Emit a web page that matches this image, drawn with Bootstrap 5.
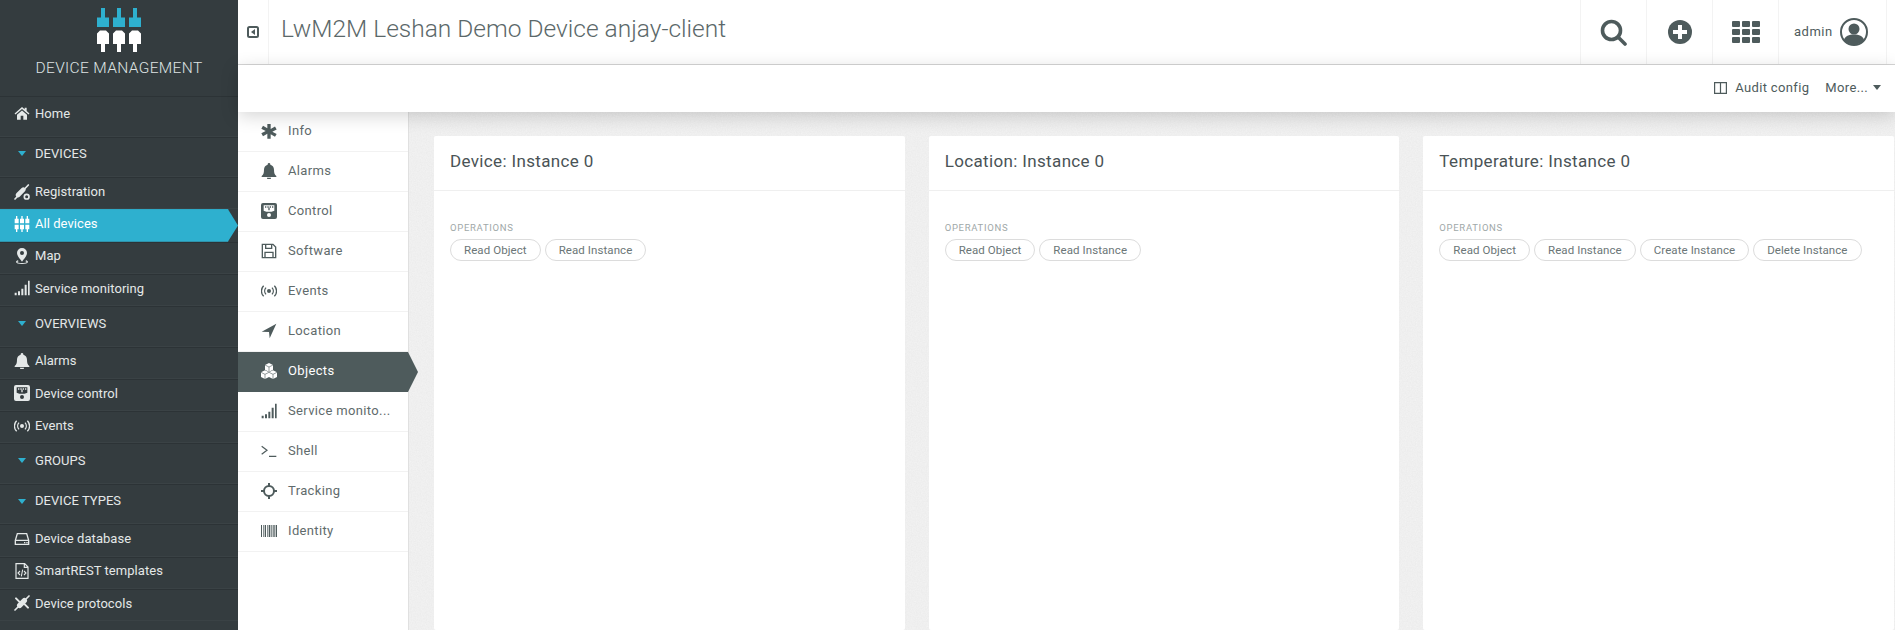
<!DOCTYPE html>
<html lang="en">
<head>
    <meta charset="UTF-8">
    <meta name="viewport" content="width=device-width, initial-scale=1.0">
    <title>LwM2M Leshan Demo Device anjay-client</title>
    <link href="https://cdn.jsdelivr.net/npm/bootstrap@5.3.0/dist/css/bootstrap.min.css" rel="stylesheet">
    <style>
        html, body { height: 630px; overflow: hidden; }
        body {
            font-family: Roboto, "Liberation Sans", sans-serif; color: #4e5b5c; background-color: #f4f4f4;
            background-image: url("data:image/svg+xml,%3Csvg xmlns='http://www.w3.org/2000/svg' width='120' height='120'%3E%3Cfilter id='n'%3E%3CfeTurbulence type='fractalNoise' baseFrequency='.8' numOctaves='2' stitchTiles='stitch'/%3E%3CfeColorMatrix values='0 0 0 0 0 0 0 0 0 0 0 0 0 0 0 0 0 0 .04 0'/%3E%3C/filter%3E%3Crect width='120' height='120' filter='url(%23n)'/%3E%3C/svg%3E");
        }
        .ico { width: 16px; height: 16px; fill: currentColor; flex: none; }

        /* left navigator */
        .side { width: 238px; flex: none; background: #343c3f; color: #e4e8e8; font-size: 13px; letter-spacing: .05px; }
        .side-brand { height: 96px; padding-top: 8px; }
        .side-brand svg { display: block; margin: 0 auto; }
        .side-brand div { font-size: 15.5px; font-weight: 300; letter-spacing: .35px; text-align: center; color: #dfe4e4; margin-top: 5px; }
        .side-row { height: 32.25px; padding: 0 0 3px 14px; gap: 5px; border-top: 1px solid #2c3336; border-bottom: 1px solid #3a4245; }
        .side-row.tall { height: 40.5px; padding-bottom: 6px; }
        .side-row.sec .tri { width: 16px; display: flex; justify-content: center; }
        .side-row.sec .tri i { border: 4px solid transparent; border-top: 5px solid #2eb0cf; border-bottom: 0; }
        .side-row.on { background: #2eb0cf; color: #fff; border-color: #2eb0cf; clip-path: polygon(0 0, 228px 0, 238px 50%, 228px 100%, 0 100%); }

        /* top */
        .top-bar { height: 65px; background: #fff; border-bottom: 1px solid #d6d6d6; }
        .tog-cell { width: 31px; border-right: 1px solid #f3f3f3; }
        .page-title { font-size: 24.5px; font-weight: 300; color: #5b6869; margin: 0 0 0 12px; padding-bottom: 6px; }
        .top-cell { width: 66px; border-left: 1px solid #f3f3f3; }
        .user-cell { width: 109px; border-left: 1px solid #f3f3f3; border-right: 1px solid #f3f3f3; margin-right: 8px; font-size: 13px; gap: 7px; padding-left: 15px; letter-spacing: .5px; }
        .tool-bar { height: 47px; background: #fff; font-size: 13px; letter-spacing: .35px; gap: 16px; padding: 0 14px 2px 0; box-shadow: 0 4px 18px rgba(0,0,0,.17); position: relative; z-index: 2; }
        .tool-caret { border: 4px solid transparent; border-top: 5px solid #4e5b5c; border-bottom: 0; margin-left: 5px; }

        /* tabs */
        .tabs { width: 171px; flex: none; background: #fff; border-right: 1px solid #e0e0e0; font-size: 13px; letter-spacing: .35px; color: #5f6b6c; }
        .tab-row { height: 40px; padding: 0 0 2px 23px; gap: 11px; border-bottom: 1px solid #f2f2f2; }
        .tab-row .ico { color: #4e5b5c; }
        .tab-row.on { background: #4e5b5c; color: #fff; border: 0; margin-right: -10px; clip-path: polygon(0 0, 170px 0, 180px 50%, 170px 100%, 0 100%); }
        .tab-row.on .ico { color: #fff; }

        /* object cards */
        .obj-grid { flex: 1; padding: 24px 1px 0 25px; gap: 24px; }
        .obj-card { flex: 1 1 0; min-width: 0; border: 0; border-radius: 2px; background: #fff; }
        .obj-head { height: 55px; padding: 0 16px 2px; font-size: 17px; letter-spacing: .35px; color: #4a5356; background: #fff; border-bottom: 1px solid #efefef; }
        .obj-body { padding: 31px 16px 0; }
        .op-label { font-size: 9.5px; letter-spacing: .7px; color: #a0a8a8; line-height: 12px; margin-bottom: 5px; }
        .op-btn { height: 22px; padding: 0 13px; font-size: 11.5px; line-height: 20px; letter-spacing: .08px; color: #6b7677; background: #fff; border: 1px solid #dcdcdc; }
    </style>
</head>
<body>
<svg width="0" height="0" class="d-block">
    <symbol id="i-home" viewBox="0 0 24 24"><path d="M12 3 .8 12.600l1.400 1.700L12 6l9.800 8.300 1.400-1.700-4.200-3.600V4h-3v2.400zM4.500 14.700V22h5.500v-6h4v6h5.500v-7.300L12 8.400z"/></symbol>
    <symbol id="i-reg" viewBox="0 0 24 24"><g fill="none" stroke="currentColor" stroke-linecap="round"><path stroke-width="2.500" d="M1.500 22.500 21.500 1.500"/><path stroke-width="7" d="M6 16.500 14 8.500"/></g><circle cx="19" cy="19" r="3.500" fill="none" stroke="currentColor" stroke-width="2.500"/></symbol>
    <symbol id="i-dev" viewBox="0 0 24 24"><path d="M3 0h2v4h2v7H1V4h2zM11 0h2v4h2v7H9V4h2zM19 0h2v4h2v7h-6V4h2zM1 13h6v7H5v4H3v-4H1zM9 13h6v7h-2v4h-2v-4H9zM17 13h6v7h-2v4h-2v-4h-2z"/></symbol>
    <symbol id="i-pin" viewBox="0 0 24 24"><path fill-rule="evenodd" d="M12 0a7.500 7.500 0 0 1 7.500 7.500c0 4-4.500 9-7.500 13-3-4-7.500-9-7.500-13A7.500 7.500 0 0 1 12 0zm0 4.500a3 3 0 1 0 0 6 3 3 0 0 0 0-6z"/><path d="M6 18.500c-2 .6-3 1.400-3 2.500 0 2 4 3 9 3s9-1 9-3c0-1.100-1-1.900-3-2.500l-.8 1.300c1.200.4 1.800.8 1.800 1.200 0 .8-3 1.500-7 1.500s-7-.7-7-1.500c0-.4.6-.8 1.800-1.200z"/></symbol>
    <symbol id="i-sig" viewBox="0 0 24 24"><path d="M1 19h3v4H1zM6 17h3v6H6zM11 13h3v10h-3zM16 7h3v16h-3zM21 1h2.500v22H21z"/></symbol>
    <symbol id="i-bell" viewBox="0 0 24 24"><path d="M12 0c1.100 0 2 .9 2 2v.6c3.500.9 5.500 3.900 5.500 7.400 0 5 1 7.500 3.500 9.500v1.500H1v-1.500C3.500 17.500 4.500 15 4.500 10c0-3.500 2-6.500 5.500-7.400V2c0-1.100.9-2 2-2zM9 22h6a3 3 0 0 1-6 0z"/></symbol>
    <symbol id="i-ctl" viewBox="0 0 24 24"><path fill-rule="evenodd" d="M3 0h18a3 3 0 0 1 3 3v18a3 3 0 0 1-3 3H3a3 3 0 0 1-3-3V3a3 3 0 0 1 3-3zm1 3.500v8l4 1.500h8l4-1.500v-8zM12 15a3 3 0 1 0 0 6 3 3 0 0 0 0-6z"/><path d="M6 5h2v2H6zM9.500 5h2v2h-2zM13 5h2v2h-2zM16.500 5h2v2h-2zM11 7h2v4h-2z"/></symbol>
    <symbol id="i-evt" viewBox="0 0 24 24"><circle cx="12" cy="12" r="3"/><path fill="none" stroke="currentColor" stroke-width="2" d="M7.500 7c-2.600 2.800-2.600 7.200 0 10M16.500 7c2.600 2.800 2.600 7.200 0 10M4 4c-4.500 4.500-4.500 11.500 0 16M20 4c4.500 4.500 4.500 11.500 0 16"/></symbol>
    <symbol id="i-db" viewBox="0 0 24 24"><path fill="none" stroke="currentColor" stroke-width="2" d="M2 14 5 4h14l3 10v6H2zM2 14h20"/><path d="M15 16.500h2v2h-2zM18.500 16.500h2v2h-2z"/></symbol>
    <symbol id="i-rest" viewBox="0 0 24 24"><path fill="none" stroke="currentColor" stroke-width="1.800" d="M3 1h13l5 5v17H3zM15.500 1v5.500H21"/><path fill="none" stroke="currentColor" stroke-width="1.600" d="M9 12l-3 3 3 3M15 12l3 3-3 3M13 10l-2 10"/></symbol>
    <symbol id="i-proto" viewBox="0 0 24 24"><g fill="none" stroke="currentColor" stroke-linecap="round"><path stroke-width="2.500" d="M1.500 22.500 22.500 1.500"/><path stroke-width="8" d="M8.500 15.500 15.500 8.500"/><path stroke-width="3" d="M3 5l6 6M15 13l6 6"/></g></symbol>
    <symbol id="i-star" viewBox="0 0 24 24"><path d="M9.500 1h5v7.500l6.500-3.700 2.500 4.300-6.500 3.400 6.500 3.400-2.500 4.300-6.500-3.700V23h-5v-7.500L3 19.200.5 14.900 7 11.500.5 8.100 3 3.800l6.500 3.700z" transform="translate(0 .500)"/></symbol>
    <symbol id="i-save" viewBox="0 0 24 24"><path fill="none" stroke="currentColor" stroke-width="2" d="M2 2h16l4 4v16H2zM7 2v6h9V2M6 22v-8h12v8"/></symbol>
    <symbol id="i-loc" viewBox="0 0 24 24"><path d="M23 1 1 13l11 .5L13 23z"/></symbol>
    <symbol id="i-obj" viewBox="0 0 24 24"><path d="M12 0l6 3v7l-6 3-6-3V3zM6 11l6 3v7l-6 3-6-3v-7zM18 11l6 3v7l-6 3-6-3v-7z"/><path fill="none" stroke="#4e5b5c" stroke-width=".9" d="M6 3l6 3 6-3M12 6v6M0 14l6 3 6-3M6 17v7M12 14l6 3 6-3M18 17v7"/></symbol>
    <symbol id="i-sh" viewBox="0 0 24 24"><path fill="none" stroke="currentColor" stroke-width="1.800" d="M1 5l8 6-8 6M12 20h11"/></symbol>
    <symbol id="i-trk" viewBox="0 0 24 24"><path d="M10.500 0h3v5h-3zM10.500 19h3v5h-3zM0 10.500h5v3H0zM19 10.500h5v3h-5z"/><circle cx="12" cy="12" r="7.500" fill="none" stroke="currentColor" stroke-width="3"/></symbol>
    <symbol id="i-bar" viewBox="0 0 24 24"><path d="M0 3h1.500v18H0zM3 3h1v18H3zM5.500 3h2v18h-2zM9 3h1v18H9zM11.500 3h2.500v18h-2.500zM15 3h1v18h-1zM17.500 3h1.500v18h-1.500zM20 3h1v18h-1zM22 3h2v18h-2z"/></symbol>
</svg>

<div class="d-flex" id="appShell">
    <!-- Navigator -->
    <nav class="side vh-100">
        <div class="side-brand">
            <svg width="44" height="44" viewBox="0 0 44 44">
                <path fill="#2eb0cf" d="M4 0h4v9.500h4V19H0V9.500h4zM20 0h4v9.500h4V19H16V9.500h4zM36 0h4v9.500h4V19H32V9.500h4z"/>
                <path fill="#fff" d="M3 22.500h6l3 3V36H8v8H4v-8H0V25.500zM19 22.500h6l3 3V36h-4v8h-4v-8h-4V25.500zM35 22.500h6l3 3V36h-4v8h-4v-8h-4V25.500z"/>
            </svg>
            <div>DEVICE MANAGEMENT</div>
        </div>
        <div class="side-row tall d-flex align-items-center"><svg class="ico"><use href="#i-home"/></svg>Home</div>
        <div class="side-row tall sec d-flex align-items-center"><span class="tri"><i></i></span>DEVICES</div>
        <div class="side-row d-flex align-items-center"><svg class="ico"><use href="#i-reg"/></svg>Registration</div>
        <div class="side-row on d-flex align-items-center"><svg class="ico"><use href="#i-dev"/></svg>All devices</div>
        <div class="side-row d-flex align-items-center"><svg class="ico"><use href="#i-pin"/></svg>Map</div>
        <div class="side-row d-flex align-items-center"><svg class="ico"><use href="#i-sig"/></svg>Service monitoring</div>
        <div class="side-row tall sec d-flex align-items-center"><span class="tri"><i></i></span>OVERVIEWS</div>
        <div class="side-row d-flex align-items-center"><svg class="ico"><use href="#i-bell"/></svg>Alarms</div>
        <div class="side-row d-flex align-items-center"><svg class="ico"><use href="#i-ctl"/></svg>Device control</div>
        <div class="side-row d-flex align-items-center"><svg class="ico"><use href="#i-evt"/></svg>Events</div>
        <div class="side-row tall sec d-flex align-items-center"><span class="tri"><i></i></span>GROUPS</div>
        <div class="side-row tall sec d-flex align-items-center"><span class="tri"><i></i></span>DEVICE TYPES</div>
        <div class="side-row d-flex align-items-center"><svg class="ico"><use href="#i-db"/></svg>Device database</div>
        <div class="side-row d-flex align-items-center"><svg class="ico"><use href="#i-rest"/></svg>SmartREST templates</div>
        <div class="side-row d-flex align-items-center"><svg class="ico"><use href="#i-proto"/></svg>Device protocols</div>
    </nav>

    <div class="flex-grow-1 d-flex flex-column vh-100">
        <!-- Header -->
        <header class="top-bar d-flex align-items-stretch">
            <div class="tog-cell d-flex align-items-center justify-content-center">
                <svg width="12" height="12" viewBox="0 0 12 12"><rect x="1" y="1" width="10" height="10" rx="1.500" fill="#fff" stroke="#4e5b5c" stroke-width="2"/><path fill="#4e5b5c" d="M8 3v6L4 6z"/></svg>
            </div>
            <h1 class="page-title align-self-center flex-grow-1">LwM2M Leshan Demo Device anjay-client</h1>
            <div class="top-cell d-flex align-items-center justify-content-center">
                <svg width="27" height="27" viewBox="0 0 27 27"><circle cx="11.500" cy="11.500" r="9" fill="none" stroke="#4e5b5c" stroke-width="3.600"/><path d="M18 18l7 7" stroke="#4e5b5c" stroke-width="3.600" stroke-linecap="round"/></svg>
            </div>
            <div class="top-cell d-flex align-items-center justify-content-center">
                <svg width="24" height="24" viewBox="0 0 24 24"><circle cx="12" cy="12" r="12" fill="#4e5b5c"/><path fill="#fff" d="M10 5h4v5h5v4h-5v5h-4v-5H5v-4h5z"/></svg>
            </div>
            <div class="top-cell d-flex align-items-center justify-content-center">
                <svg width="28" height="22" viewBox="0 0 28 22"><g fill="#4e5b5c"><rect width="8" height="6" rx="1"/><rect x="10" width="8" height="6" rx="1"/><rect x="20" width="8" height="6" rx="1"/><rect y="8" width="8" height="6" rx="1"/><rect x="10" y="8" width="8" height="6" rx="1"/><rect x="20" y="8" width="8" height="6" rx="1"/><rect y="16" width="8" height="6" rx="1"/><rect x="10" y="16" width="8" height="6" rx="1"/><rect x="20" y="16" width="8" height="6" rx="1"/></g></svg>
            </div>
            <div class="user-cell d-flex align-items-center">
                admin
                <svg width="28" height="28" viewBox="0 0 28 28"><circle cx="14" cy="14" r="13" fill="#fff" stroke="#4e5b5c" stroke-width="2"/><circle cx="14" cy="11" r="5.500" fill="#4e5b5c"/><path fill="#4e5b5c" d="M4 22c1-4 5-5.500 10-5.500S23 18 24 22c-2.500 3-6 4.500-10 4.500S6.500 25 4 22z"/></svg>
            </div>
        </header>
        <div class="tool-bar d-flex align-items-center justify-content-end">
            <span class="d-flex align-items-center gap-2"><svg width="13" height="12" viewBox="0 0 13 12"><path fill="none" stroke="#4e5b5c" stroke-width="1.200" d="M.6.6h11.800v10.800H.6zM6.500.6v10.800"/></svg>Audit config</span>
            <span class="d-flex align-items-center">More...<i class="tool-caret"></i></span>
        </div>

        <div class="d-flex flex-grow-1 overflow-hidden">
            <!-- Tabs -->
            <div class="tabs">
                <div class="tab-row d-flex align-items-center"><svg class="ico"><use href="#i-star"/></svg>Info</div>
                <div class="tab-row d-flex align-items-center"><svg class="ico"><use href="#i-bell"/></svg>Alarms</div>
                <div class="tab-row d-flex align-items-center"><svg class="ico"><use href="#i-ctl"/></svg>Control</div>
                <div class="tab-row d-flex align-items-center"><svg class="ico"><use href="#i-save"/></svg>Software</div>
                <div class="tab-row d-flex align-items-center"><svg class="ico"><use href="#i-evt"/></svg>Events</div>
                <div class="tab-row d-flex align-items-center"><svg class="ico"><use href="#i-loc"/></svg>Location</div>
                <div class="tab-row on d-flex align-items-center"><svg class="ico"><use href="#i-obj"/></svg>Objects</div>
                <div class="tab-row d-flex align-items-center"><svg class="ico"><use href="#i-sig"/></svg>Service monito...</div>
                <div class="tab-row d-flex align-items-center"><svg class="ico"><use href="#i-sh"/></svg>Shell</div>
                <div class="tab-row d-flex align-items-center"><svg class="ico"><use href="#i-trk"/></svg>Tracking</div>
                <div class="tab-row d-flex align-items-center"><svg class="ico"><use href="#i-bar"/></svg>Identity</div>
            </div>

            <!-- Objects -->
            <div class="obj-grid d-flex">
                <div class="card obj-card">
                    <div class="card-header obj-head d-flex align-items-center">Device: Instance 0</div>
                    <div class="card-body obj-body">
                        <div class="op-label">OPERATIONS</div>
                        <div class="d-flex gap-1">
                            <button type="button" class="btn rounded-pill op-btn">Read Object</button>
                            <button type="button" class="btn rounded-pill op-btn">Read Instance</button>
                        </div>
                    </div>
                </div>
                <div class="card obj-card">
                    <div class="card-header obj-head d-flex align-items-center">Location: Instance 0</div>
                    <div class="card-body obj-body">
                        <div class="op-label">OPERATIONS</div>
                        <div class="d-flex gap-1">
                            <button type="button" class="btn rounded-pill op-btn">Read Object</button>
                            <button type="button" class="btn rounded-pill op-btn">Read Instance</button>
                        </div>
                    </div>
                </div>
                <div class="card obj-card">
                    <div class="card-header obj-head d-flex align-items-center">Temperature: Instance 0</div>
                    <div class="card-body obj-body">
                        <div class="op-label">OPERATIONS</div>
                        <div class="d-flex gap-1">
                            <button type="button" class="btn rounded-pill op-btn">Read Object</button>
                            <button type="button" class="btn rounded-pill op-btn">Read Instance</button>
                            <button type="button" class="btn rounded-pill op-btn">Create Instance</button>
                            <button type="button" class="btn rounded-pill op-btn">Delete Instance</button>
                        </div>
                    </div>
                </div>
            </div>
        </div>
    </div>
</div>

<script src="https://cdn.jsdelivr.net/npm/bootstrap@5.3.0/dist/js/bootstrap.bundle.min.js"></script>
</body>
</html>
